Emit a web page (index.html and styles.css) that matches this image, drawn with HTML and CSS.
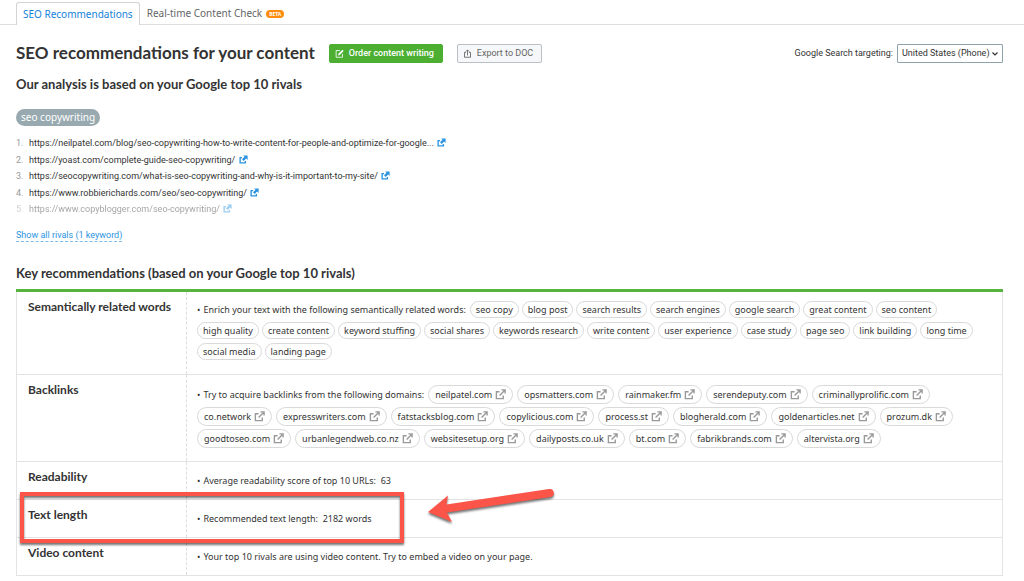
FILE: index.html
```html
<!DOCTYPE html>
<html lang="en">
<head>
<meta charset="utf-8">
<title>SEO recommendations for your content</title>
<link rel="stylesheet" href="styles.css">
</head>
<body>
<svg class="sprite" aria-hidden="true">
  <symbol id="ext" viewBox="0 0 12 12"><path d="M5 3H1.500V10.500H9V7M7 1H11V5M11 1L5 7" fill="none" stroke="currentColor" stroke-width="1.500"/></symbol>
  <symbol id="ext-bold" viewBox="0 0 12 12"><path d="M4 3.500H1.500V10.500H8.500V8" fill="none" stroke="currentColor" stroke-width="1.800"/><path d="M5.500 .5H11.500V6.500L9.600 4.600L6.200 8L4 5.800L7.400 2.400Z" fill="currentColor"/></symbol>
</svg>

<nav class="tabs">
  <a class="tab tab-active" href="#seo">SEO Recommendations</a>
  <a class="tab" href="#check">Real-time Content Check <span class="beta">BETA</span></a>
</nav>

<main class="page">
  <header class="header">
    <h1 class="title">SEO recommendations for your content</h1>
    <button class="btn btn-green" type="button">
      <svg class="btn-icon" viewBox="0 0 12 12"><path d="M6.500 2H1.500V11H10V6.500" fill="none" stroke="currentColor" stroke-width="1.100"/><path d="M4 8.500L4.600 6.200L9.800 1L11.500 2.700L6.300 7.900Z" fill="currentColor"/></svg>
      Order content writing
    </button>
    <button class="btn btn-grey" type="button">
      <svg class="btn-icon" viewBox="0 0 12 12"><path d="M4 4.500H2V11H10V4.500H8M6 8.500V1.500M3.800 3.500L6 1.200L8.200 3.500" fill="none" stroke="currentColor" stroke-width="1.200"/></svg>
      Export to DOC
    </button>
    <div class="targeting">
      <label for="target">Google Search targeting:</label>
      <span class="select-wrap">
        <select id="target" class="select"><option>United States (Phone)</option></select>
        <svg class="chevron" viewBox="0 0 8 8"><path d="M1.500 2.500L4 5L6.500 2.500" fill="none" stroke="currentColor" stroke-width="1.200"/></svg>
      </span>
    </div>
  </header>

  <h2 class="subtitle">Our analysis is based on your Google top 10 rivals</h2>
  <span class="keyword">seo copywriting</span>

  <ol class="rivals">
    <li><span class="num">1.</span><a href="#r1">https://neilpatel.com/blog/seo-copywriting-how-to-write-content-for-people-and-optimize-for-google... <svg class="rival-icon"><use href="#ext-bold"/></svg></a></li>
    <li><span class="num">2.</span><a href="#r2">https://yoast.com/complete-guide-seo-copywriting/ <svg class="rival-icon"><use href="#ext-bold"/></svg></a></li>
    <li><span class="num">3.</span><a href="#r3">https://seocopywriting.com/what-is-seo-copywriting-and-why-is-it-important-to-my-site/ <svg class="rival-icon"><use href="#ext-bold"/></svg></a></li>
    <li><span class="num">4.</span><a href="#r4">https://www.robbierichards.com/seo/seo-copywriting/ <svg class="rival-icon"><use href="#ext-bold"/></svg></a></li>
    <li class="faded"><span class="num">5.</span><a href="#r5">https://www.copyblogger.com/seo-copywriting/ <svg class="rival-icon"><use href="#ext-bold"/></svg></a></li>
  </ol>
  <a class="show-all" href="#all">Show all rivals (1 keyword)</a>

  <h2 class="key-title">Key recommendations (based on your Google top 10 rivals)</h2>
  <table class="recs">
    <tr class="row-words">
      <th scope="row">Semantically related words</th>
      <td><div class="tags words">
        <span class="lead">Enrich your text with the following semantically related words:</span>
        <span class="tag">seo copy</span><span class="tag">blog post</span><span class="tag">search results</span><span class="tag">search engines</span><span class="tag">google search</span><span class="tag">great content</span><span class="tag">seo content</span><span class="tag">high quality</span><span class="tag">create content</span><span class="tag">keyword stuffing</span><span class="tag">social shares</span><span class="tag">keywords research</span><span class="tag">write content</span><span class="tag">user experience</span><span class="tag">case study</span><span class="tag">page seo</span><span class="tag">link building</span><span class="tag">long time</span><span class="tag">social media</span><span class="tag">landing page</span>
      </div></td>
    </tr>
    <tr class="row-links">
      <th scope="row">Backlinks</th>
      <td><div class="tags domains">
        <span class="lead">Try to acquire backlinks from the following domains:</span>
        <a class="tag" href="#d">neilpatel.com<svg><use href="#ext"/></svg></a><a class="tag" href="#d">opsmatters.com<svg><use href="#ext"/></svg></a><a class="tag" href="#d">rainmaker.fm<svg><use href="#ext"/></svg></a><a class="tag" href="#d">serendeputy.com<svg><use href="#ext"/></svg></a><a class="tag" href="#d">criminallyprolific.com<svg><use href="#ext"/></svg></a><a class="tag" href="#d">co.network<svg><use href="#ext"/></svg></a><a class="tag" href="#d">expresswriters.com<svg><use href="#ext"/></svg></a><a class="tag" href="#d">fatstacksblog.com<svg><use href="#ext"/></svg></a><a class="tag" href="#d">copylicious.com<svg><use href="#ext"/></svg></a><a class="tag" href="#d">process.st<svg><use href="#ext"/></svg></a><a class="tag" href="#d">blogherald.com<svg><use href="#ext"/></svg></a><a class="tag" href="#d">goldenarticles.net<svg><use href="#ext"/></svg></a><a class="tag" href="#d">prozum.dk<svg><use href="#ext"/></svg></a><a class="tag" href="#d">goodtoseo.com<svg><use href="#ext"/></svg></a><a class="tag" href="#d">urbanlegendweb.co.nz<svg><use href="#ext"/></svg></a><a class="tag" href="#d">websitesetup.org<svg><use href="#ext"/></svg></a><a class="tag" href="#d">dailyposts.co.uk<svg><use href="#ext"/></svg></a><a class="tag" href="#d">bt.com<svg><use href="#ext"/></svg></a><a class="tag" href="#d">fabrikbrands.com<svg><use href="#ext"/></svg></a><a class="tag" href="#d">altervista.org<svg><use href="#ext"/></svg></a>
      </div></td>
    </tr>
    <tr>
      <th scope="row">Readability</th>
      <td><span class="lead">Average readability score of top 10 URLs:&nbsp; 63</span></td>
    </tr>
    <tr>
      <th scope="row" class="marked">Text length
        <span class="marker"></span>
        <svg class="arrow" viewBox="0 0 136 48"><path d="M4 28L24 11.500L22.500 20.500L125 5A4 4 0 0 1 126.500 13L23 28.500L28 38Z" fill="#fb5449"/></svg>
      </th>
      <td><span class="lead">Recommended text length:&nbsp; 2182 words</span></td>
    </tr>
    <tr>
      <th scope="row">Video content</th>
      <td><span class="lead">Your top 10 rivals are using video content. Try to embed a video on your page.</span></td>
    </tr>
  </table>
</main>
</body>
</html>
```
FILE: styles.css
```css
* { box-sizing: border-box; }
body { margin: 0; background: #fff; color: #333; font: 9px/16px Roboto, sans-serif; }
a { color: inherit; text-decoration: none; }
.sprite { display: none; }

.tabs { display: flex; height: 25px; padding: 2px 16px 0; border-bottom: 1px solid #ddd; font-family: "Noto Sans", sans-serif; font-size: 10px; line-height: 23px; color: #666; }
.tab { display: flex; align-items: center; gap: 4px; height: 23px; padding: 0 7px; }
.tab-active { height: 23px; margin-bottom: -1px; padding: 0 6px; border: 1px solid #d4d4d4; border-bottom: 0; border-radius: 3px 3px 0 0; background: #fff; color: #1583d8; }
.beta { padding: 0 3px; border-radius: 4px; background: #ff8c0f; color: #fff; font-size: 5px; font-weight: 700; line-height: 8px; }

.page { padding: 18px 21px 4px 16px; }
.header { display: flex; align-items: center; height: 20px; }
.title { margin: 0 14px 0 0; font-family: Lato, sans-serif; font-size: 17px; font-weight: 700; line-height: 20px; white-space: nowrap; }
.btn { display: flex; align-items: center; gap: 5px; height: 19px; padding: 0 8px 0 5px; border: 1px solid; border-radius: 2px; font: inherit; white-space: nowrap; }
.btn-icon { width: 9px; height: 9px; }
.btn-green { margin-right: 14px; border-color: #4caf32; background: #4caf32; color: #fff; font-weight: 500; }
.btn-grey { border-color: #b9c0c4; background: #f5f7f8; color: #666; }
.targeting { display: flex; align-items: center; gap: 4px; margin-left: auto; white-space: nowrap; }
.select-wrap { position: relative; display: flex; }
.select { height: 19px; margin: 0; padding: 0 12px 0 4px; border: 1px solid #8ea3ab; border-radius: 1px; background: #fff; color: #333; font: inherit; appearance: none; }
.chevron { position: absolute; top: 6px; right: 4px; width: 8px; height: 8px; pointer-events: none; }

.subtitle, .key-title { margin: 0; font-family: Lato, sans-serif; font-size: 13px; font-weight: 700; line-height: 20px; }
.subtitle { margin-top: 11px; }
.keyword { display: inline-block; margin-top: 15px; padding: 0 5px; border-radius: 9px; background: #98aab0; color: #fff; font-family: "Noto Sans", sans-serif; font-size: 10px; line-height: 17px; }

.rivals { margin: 9px 0 0; padding: 0; list-style: none; line-height: 17px; }
.rivals li { display: flex; height: 17px; }
.rivals li:nth-child(even) { height: 16px; }
.num { width: 13px; color: #999; }
.rival-icon { width: 9px; height: 9px; margin-left: 1px; color: #2b94e1; vertical-align: -1px; }
.faded { opacity: .45; }
.show-all { display: inline-block; margin-top: 12px; border-bottom: 1px dashed #7dbcea; color: #2b94e1; line-height: 11px; }
.key-title { margin-top: 20px; }

.recs { width: 100%; margin-top: 6px; font-family: "Noto Sans", sans-serif; border-collapse: collapse; border: 1px solid #e3e3e3; border-top: 3px solid #56b33e; table-layout: fixed; }
.recs tr { height: 38px; }
.recs .row-words { height: 84px; }
.recs .row-links { height: 87px; }
.recs th { width: 170px; padding: 6px 11px 0; border-right: 1px dashed #ddd; border-bottom: 1px solid #e3e3e3; font-family: Lato, sans-serif; font-size: 12px; font-weight: 700; line-height: 18px; text-align: left; vertical-align: top; }
.recs td { padding: 10px 10px 0; border-bottom: 1px solid #e3e3e3; line-height: 18px; vertical-align: top; }
.recs .row-words td { padding-top: 9px; }
.lead::before { content: "•"; margin-right: 3px; }
.tags { display: flex; flex-wrap: wrap; }
.tags .lead { margin-right: 4px; line-height: 17px; }
.tag { display: flex; align-items: center; height: 17px; padding: 0 5px; border: 1px solid #d9d9d9; border-radius: 10px; white-space: nowrap; }
.tag svg { width: 11px; height: 11px; color: #999; }
.words { gap: 4px 0; }
.words .tag { margin-right: 3px; }
.domains { gap: 3px 0; }
.domains .lead { line-height: 19px; }
.domains .tag { gap: 3px; height: 19px; margin-right: 4px; padding: 0 6px; }

.marked { position: relative; }
.marker { position: absolute; top: -8px; left: 3px; width: 384px; height: 51px; border: 4px solid #fb5449; filter: drop-shadow(0 2px 1px rgba(0, 0, 0, .55)); }
.arrow { position: absolute; top: -16px; left: 407px; width: 136px; height: 48px; filter: drop-shadow(0 2px 1px rgba(0, 0, 0, .55)); }
```
